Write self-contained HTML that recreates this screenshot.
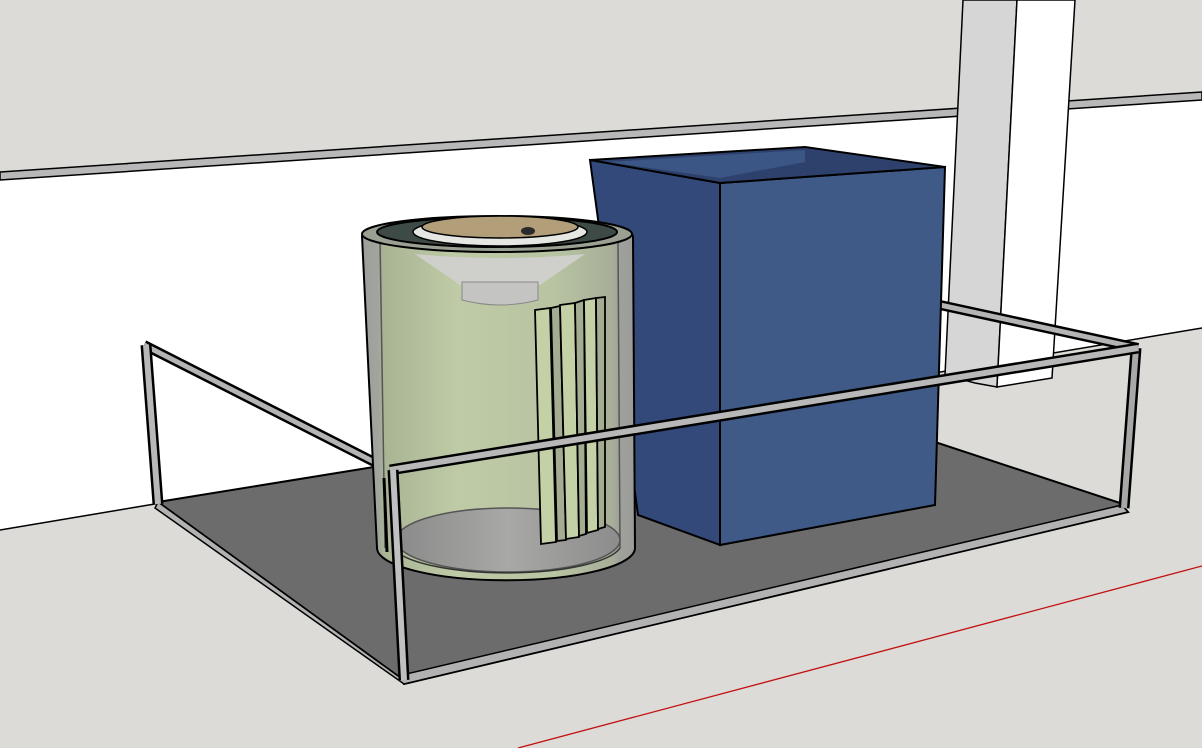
<!DOCTYPE html>
<html><head><style>html,body{margin:0;padding:0;width:1202px;height:748px;overflow:hidden;background:#dcdbd8}</style></head>
<body>
<svg width="1202" height="748" viewBox="0 0 1202 748" xmlns="http://www.w3.org/2000/svg">
<defs>
<linearGradient id="cyl" x1="0" x2="1">
<stop offset="0" stop-color="#9c9e9a"/><stop offset="0.06" stop-color="#a2a49e"/><stop offset="0.08" stop-color="#a9b494"/><stop offset="0.35" stop-color="#bfcaa6"/><stop offset="0.7" stop-color="#b8c4a2"/><stop offset="0.92" stop-color="#a7ae98"/><stop offset="0.94" stop-color="#a0a29c"/><stop offset="1" stop-color="#9a9a98"/>
</linearGradient>
<linearGradient id="base" x1="0" x2="1"><stop offset="0" stop-color="#8a8a8a"/><stop offset="0.5" stop-color="#a8a8a6"/><stop offset="1" stop-color="#8c8c8c"/></linearGradient>
</defs>
<rect width="1202" height="748" fill="#dcdbd8"/>
<polygon points="0,178 1202,97 1202,328 0,530" fill="#ffffff"/>
<polygon points="0,172 1202,92 1202,100 0,180" fill="#b8b8b8" stroke="#000" stroke-width="1.5"/>
<line x1="0" y1="530" x2="1202" y2="328" stroke="#000" stroke-width="1.5"/>
<polygon points="963,0 1017,0 997,387 975,383 945,375" fill="#d6d6d6" stroke="#000" stroke-width="1.5"/>
<polygon points="1017,0 1075,0 1052,378 997,387" fill="#ffffff" stroke="#000" stroke-width="1.5"/>
<line x1="518" y1="748" x2="1202" y2="566" stroke="#c21010" stroke-width="1.3"/>
<polygon points="158,502 380,466 640,430 935,442 1120,503 1128,512 404,684 398,676" fill="#6c6c6c" stroke="#000" stroke-width="2"/>
<polygon points="158,502 398,676 1122,505 1128,512 404,684 155,508" fill="#b2b2b2" stroke="#000" stroke-width="1.5"/>
<g stroke-linejoin="round" stroke-linecap="butt">
<line x1="144" y1="345" x2="390" y2="470" stroke="#000" stroke-width="10"/>
<line x1="144" y1="345" x2="390" y2="470" stroke="#b4b4b4" stroke-width="5"/>
<line x1="940" y1="305" x2="1138" y2="348" stroke="#000" stroke-width="10"/>
<line x1="940" y1="305" x2="1138" y2="348" stroke="#b4b4b4" stroke-width="5"/>
<line x1="146" y1="345" x2="158" y2="504" stroke="#000" stroke-width="11"/>
<line x1="146" y1="345" x2="158" y2="504" stroke="#b8b8b8" stroke-width="6"/>
<line x1="1136" y1="348" x2="1124" y2="508" stroke="#000" stroke-width="11"/>
<line x1="1136" y1="348" x2="1124" y2="508" stroke="#a8a8a8" stroke-width="6"/>
</g>
<polygon points="590,160 720,183 720,545 638,515" fill="#33497a" stroke="#000" stroke-width="2"/>
<polygon points="720,183 945,167 935,505 720,545" fill="#3f5a87" stroke="#000" stroke-width="2"/>
<polygon points="590,160 805,147 945,167 720,183" fill="#2d416c" stroke="#000" stroke-width="2"/>
<polygon points="608,162 805,150 805,162 720,178" fill="#3b5585"/>
<path d="M362,236 L377,548 A128,32 0 0 0 635,548 L633,236 A136,20 0 0 0 362,236 Z" fill="url(#cyl)" stroke="#000" stroke-width="2"/>
<path d="M380,240 L385,548" stroke="#555" stroke-width="1.5" fill="none"/>
<path d="M618,240 L620,548" stroke="#555" stroke-width="1.5" fill="none"/>
<ellipse cx="508" cy="540" rx="112" ry="32" fill="url(#base)" stroke="#555" stroke-width="1.5"/>
<path d="M395,550 A115,30 0 0 0 620,548" fill="none" stroke="#333" stroke-width="1.5"/>
<ellipse cx="497" cy="234" rx="135" ry="18" fill="#9aa092" stroke="#000" stroke-width="2"/>
<ellipse cx="497" cy="232" rx="120" ry="15" fill="#3e4a46" stroke="#000" stroke-width="2"/>
<path d="M415,254 Q500,262 585,254 L540,285 L460,285 Z" fill="#cfcfcb"/>
<path d="M462,282 L462,300 Q500,310 538,300 L538,282 Z" fill="#c4c4c2" stroke="#888" stroke-width="1"/>
<ellipse cx="500" cy="232" rx="87" ry="14" fill="#e6e6e2" stroke="#000" stroke-width="1.5"/>
<ellipse cx="500" cy="227" rx="78" ry="11" fill="#b29e78" stroke="#000" stroke-width="1.5"/>
<ellipse cx="528" cy="231" rx="7" ry="4" fill="#2a2a2a"/>
<g stroke="#000" stroke-width="1.8" fill="#c4d0a6">
<polygon points="535,310 550,308 556,542 541,544"/>
<polygon points="551,308 560,306 566,540 557,541" fill="#a4ac92"/>
<polygon points="560,305 575,303 579,537 566,539"/>
<polygon points="575,303 584,300 586,534 579,536" fill="#a4ac92"/>
<polygon points="584,300 596,298 598,530 587,533"/>
<polygon points="596,298 605,297 605,527 598,529" fill="#a4ac92"/>
</g>
<g stroke-linejoin="round">
<line x1="390" y1="470" x2="1138" y2="348" stroke="#000" stroke-width="11"/>
<line x1="390" y1="470" x2="1138" y2="348" stroke="#b8b8b8" stroke-width="6"/>
<line x1="393" y1="470" x2="404" y2="680" stroke="#000" stroke-width="11"/>
<line x1="393" y1="470" x2="404" y2="680" stroke="#c0c0c0" stroke-width="6"/>
<line x1="384" y1="478" x2="387" y2="552" stroke="#000" stroke-width="3"/>
</g>
</svg>
</body></html>
